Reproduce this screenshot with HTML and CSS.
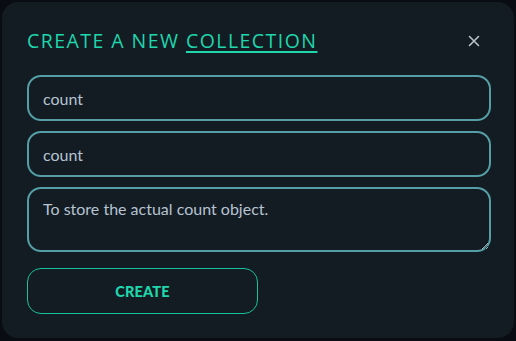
FILE: index.html
```html
<!DOCTYPE html>
<html lang="en">
<head>
<meta charset="utf-8">
<title>Create a new collection</title>
<link rel="stylesheet" href="styles.css">
</head>
<body>
<div class="modal">
  <div class="header">
    <h2 class="title">CREATE A NEW <a class="title-link" href="#">COLLECTION</a></h2>
    <button class="close" aria-label="Close">
      <svg width="12" height="12" viewBox="0 0 12 12"><path d="M1.5 1.5 L10.5 10.5 M10.5 1.5 L1.5 10.5" stroke="#b9c2ca" stroke-width="1.6" stroke-linecap="round" fill="none"/></svg>
    </button>
  </div>
  <form class="form">
    <input class="field" type="text" value="count">
    <input class="field" type="text" value="count">
    <textarea class="field area">To store the actual count object.</textarea>
    <button class="create" type="button">CREATE</button>
  </form>
</div>
</body>
</html>
```
FILE: styles.css
```css
html, body {
  margin: 0;
  padding: 0;
  background: #0a0c13;
  width: 516px;
  height: 341px;
  overflow: hidden;
}
.modal {
  box-sizing: border-box;
  margin: 2px;
  width: 512px;
  height: 336px;
  background: #131c22;
  border-radius: 16px;
  padding: 25px 25px 0 25px;
}
.header {
  display: flex;
  align-items: center;
  justify-content: space-between;
  height: 28px;
}
.title {
  margin: 0;
  font-family: "Open Sans", sans-serif;
  font-weight: 400;
  font-size: 19.5px;
  line-height: 28px;
  color: #1fd6ad;
  letter-spacing: 1.45px;
}
.title-link {
  color: #1fd6ad;
  text-decoration: underline;
  text-decoration-thickness: 2px;
  text-underline-offset: 3px;
}
.close {
  background: none;
  border: none;
  padding: 0;
  margin-right: 8px;
  width: 14px;
  height: 14px;
  display: flex;
  align-items: center;
  justify-content: center;
}
.form {
  display: flex;
  flex-direction: column;
  gap: 10px;
  margin-top: 20px;
}
.field {
  box-sizing: border-box;
  width: 464px;
  height: 46px;
  border: 2px solid #559ea6;
  border-radius: 14px;
  background: #131c22;
  color: #b6c3d3;
  font-family: "Lato", sans-serif;
  font-size: 16px;
  padding: 0 14px;
  outline: none;
}
.area {
  height: 65px;
  padding: 10px 14px;
  resize: vertical;
  line-height: 20px;
}
.create {
  box-sizing: border-box;
  margin-top: 6px;
  width: 231px;
  height: 46px;
  border: 1.5px solid #17c19d;
  border-radius: 14px;
  background: transparent;
  color: #1fd6ad;
  font-family: "Lato", sans-serif;
  font-weight: 900;
  font-size: 14.5px;
  letter-spacing: 0.2px;
}
```
